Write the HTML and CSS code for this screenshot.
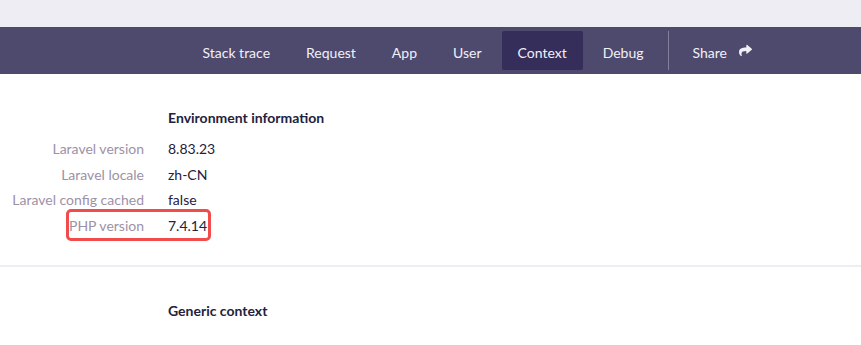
FILE: index.html
```html
<!doctype html>
<html lang="en">

<head>
    <meta charset="UTF-8" />
    <meta name="viewport" content="width=device-width, initial-scale=1.0" />
    <title>Context</title>
    <link rel="stylesheet" href="styles.css">
</head>

<body>
    <div class="topbar"></div>
    <nav class="nav">
        <a class="nav-item">Stack trace</a>
        <a class="nav-item">Request</a>
        <a class="nav-item">App</a>
        <a class="nav-item">User</a>
        <a class="nav-item active">Context</a>
        <a class="nav-item">Debug</a>
        <span class="nav-divider"></span>
        <a class="nav-item share">Share
            <svg class="share-icon" viewBox="0 0 512 512" width="13" height="13">
                <path fill="currentColor" d="M503.7 189.8L327.7 37.9C312.3 24.5 288 35.3 288 56v80.1C127.4 137.9 0 170.1 0 322.3c0 61.4 39.6 122.3 83.3 154.1 13.7 9.9 33.1-2.5 28.1-18.6C66.1 312.8 132.9 274.3 288 272.1V360c0 20.7 24.3 31.5 39.7 18.2l176-152c11.1-9.6 11.1-26.8 0-36.4z" />
            </svg>
        </a>
    </nav>

    <section class="section">
        <h2 class="section-title">Environment information</h2>
        <div class="info-row">
            <span class="info-label">Laravel version</span>
            <span class="info-value">8.83.23</span>
        </div>
        <div class="info-row">
            <span class="info-label">Laravel locale</span>
            <span class="info-value">zh-CN</span>
        </div>
        <div class="info-row">
            <span class="info-label">Laravel config cached</span>
            <span class="info-value">false</span>
        </div>
        <div class="info-row marked">
            <span class="info-label">PHP version</span>
            <span class="info-value">7.4.14</span>
            <span class="highlight"></span>
        </div>
    </section>

    <section class="section second">
        <h2 class="section-title">Generic context</h2>
    </section>
</body>

</html>
```

FILE: styles.css
```css
body {
    font-family: Lato, "Noto Sans", sans-serif;
    font-size: 14px;
    margin: 0;
    background: #ffffff;
    color: #23213d;
}

.topbar {
    height: 27px;
    background: #ededf3;
}

.nav {
    height: 47px;
    background: #4e4a6e;
    display: flex;
    align-items: center;
    justify-content: flex-end;
    gap: 4px;
    padding-right: 93px;
}

.nav-item {
    display: flex;
    align-items: center;
    box-sizing: border-box;
    height: 39px;
    padding: 3px 16px 0;
    border-radius: 2px;
    color: #f1f0f7;
    font-size: 14px;
    cursor: pointer;
}

.nav-item.active {
    background: #352d5a;
}

.nav-divider {
    width: 1px;
    height: 39px;
    background: #827e9c;
    margin: 0 4px;
}

.share-icon {
    margin-left: 12px;
    margin-top: -4px;
}

.section {
    padding: 34px 0 26px;
    border-bottom: 2px solid #ededf3;
}

.section.second {
    padding-top: 34px;
    border-bottom: none;
}

.section-title {
    margin: 0 0 8px 168px;
    font-size: 14px;
    line-height: 20px;
    font-weight: bold;
    color: #23213d;
}

.info-row {
    position: relative;
    display: grid;
    grid-template-columns: 144px 1fr;
    column-gap: 24px;
    line-height: 25.7px;
}

.info-label {
    text-align: right;
    color: #9d91a8;
}

.info-value {
    color: #23213d;
}

.highlight {
    position: absolute;
    left: 66px;
    top: -4px;
    width: 139px;
    height: 26px;
    border: 3px solid #f24b4b;
    border-radius: 5px;
}
```
